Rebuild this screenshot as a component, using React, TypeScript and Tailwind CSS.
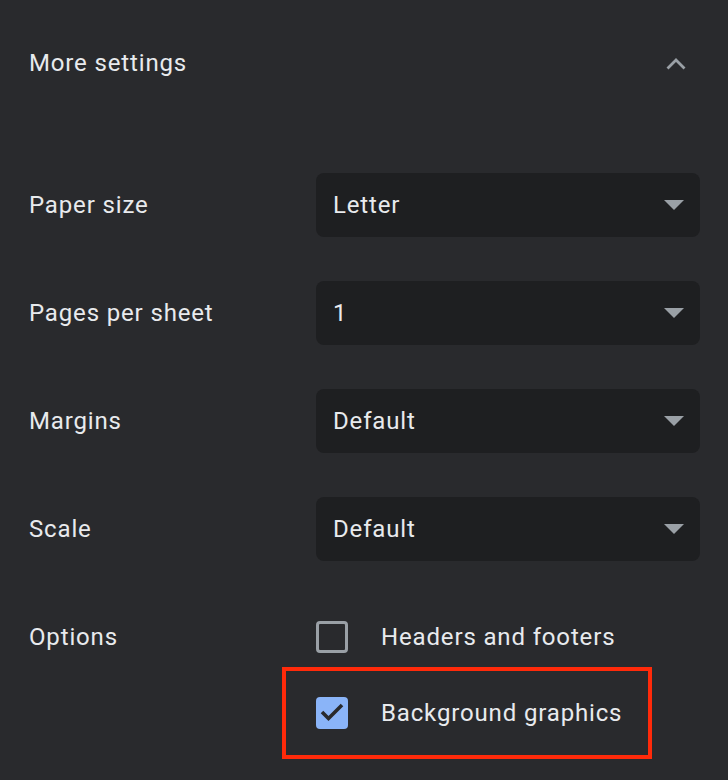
import React from "react";

const rows = [
  { label: "Paper size", value: "Letter" },
  { label: "Pages per sheet", value: "1" },
  { label: "Margins", value: "Default" },
  { label: "Scale", value: "Default" },
];

function Caret() {
  return (
    <svg width="20" height="10" viewBox="0 0 20 10">
      <path d="M0 0 L20 0 L10 10 Z" fill="#9aa0a6" />
    </svg>
  );
}

function Checkbox({ checked }: { checked?: boolean }) {
  if (checked) {
    return (
      <div className="w-8 h-8 rounded-[4px] bg-[#8ab4f8] shrink-0">
        <svg width="32" height="32" viewBox="0 0 32 32">
          <path
            d="M6 15 L12.5 21.5 L26 8"
            fill="none"
            stroke="#292a2d"
            strokeWidth="3.6"
          />
        </svg>
      </div>
    );
  }
  return (
    <div className="w-8 h-8 rounded-[4px] border-[3px] border-[#9aa0a6] shrink-0" />
  );
}

export default function App() {
  return (
    <div
      className="w-[728px] h-[780px] bg-[#292a2d] text-[#e8eaed] text-[24px] tracking-[0.85px] overflow-hidden"
      style={{ fontFamily: "Roboto, 'Liberation Sans', sans-serif" }}
    >
      <div className="h-[126px] flex items-center justify-between pl-[29px] pr-[42px]">
        <span>More settings</span>
        <svg width="20" height="13" viewBox="0 0 20 13">
          <path
            d="M1.5 11.5 L10 3 L18.5 11.5"
            fill="none"
            stroke="#9aa0a6"
            strokeWidth="2.8"
          />
        </svg>
      </div>

      <div className="mt-[47px] flex flex-col gap-[44px] pl-[29px] pr-[28px]">
        {rows.map((r) => (
          <div key={r.label} className="flex items-center h-16">
            <div className="w-[287px] shrink-0">{r.label}</div>
            <div className="flex-1 h-16 rounded-lg bg-[#1e1f21] flex items-center justify-between pl-[17px] pr-4">
              <span>{r.value}</span>
              <Caret />
            </div>
          </div>
        ))}
      </div>

      <div className="mt-[60px] flex pl-[29px]">
        <div className="w-[287px] shrink-0 h-8 flex items-center">Options</div>
        <div className="flex flex-col gap-[44px] relative">
          <div className="flex items-center gap-[33px] h-8">
            <Checkbox />
            <span>Headers and footers</span>
          </div>
          <div className="flex items-center gap-[33px] h-8">
            <Checkbox checked />
            <span>Background graphics</span>
          </div>
          <div className="absolute left-[-34px] top-[46px] w-[370px] h-[92px] border-[4px] border-[#ff2a0a]" />
        </div>
      </div>
    </div>
  );
}
